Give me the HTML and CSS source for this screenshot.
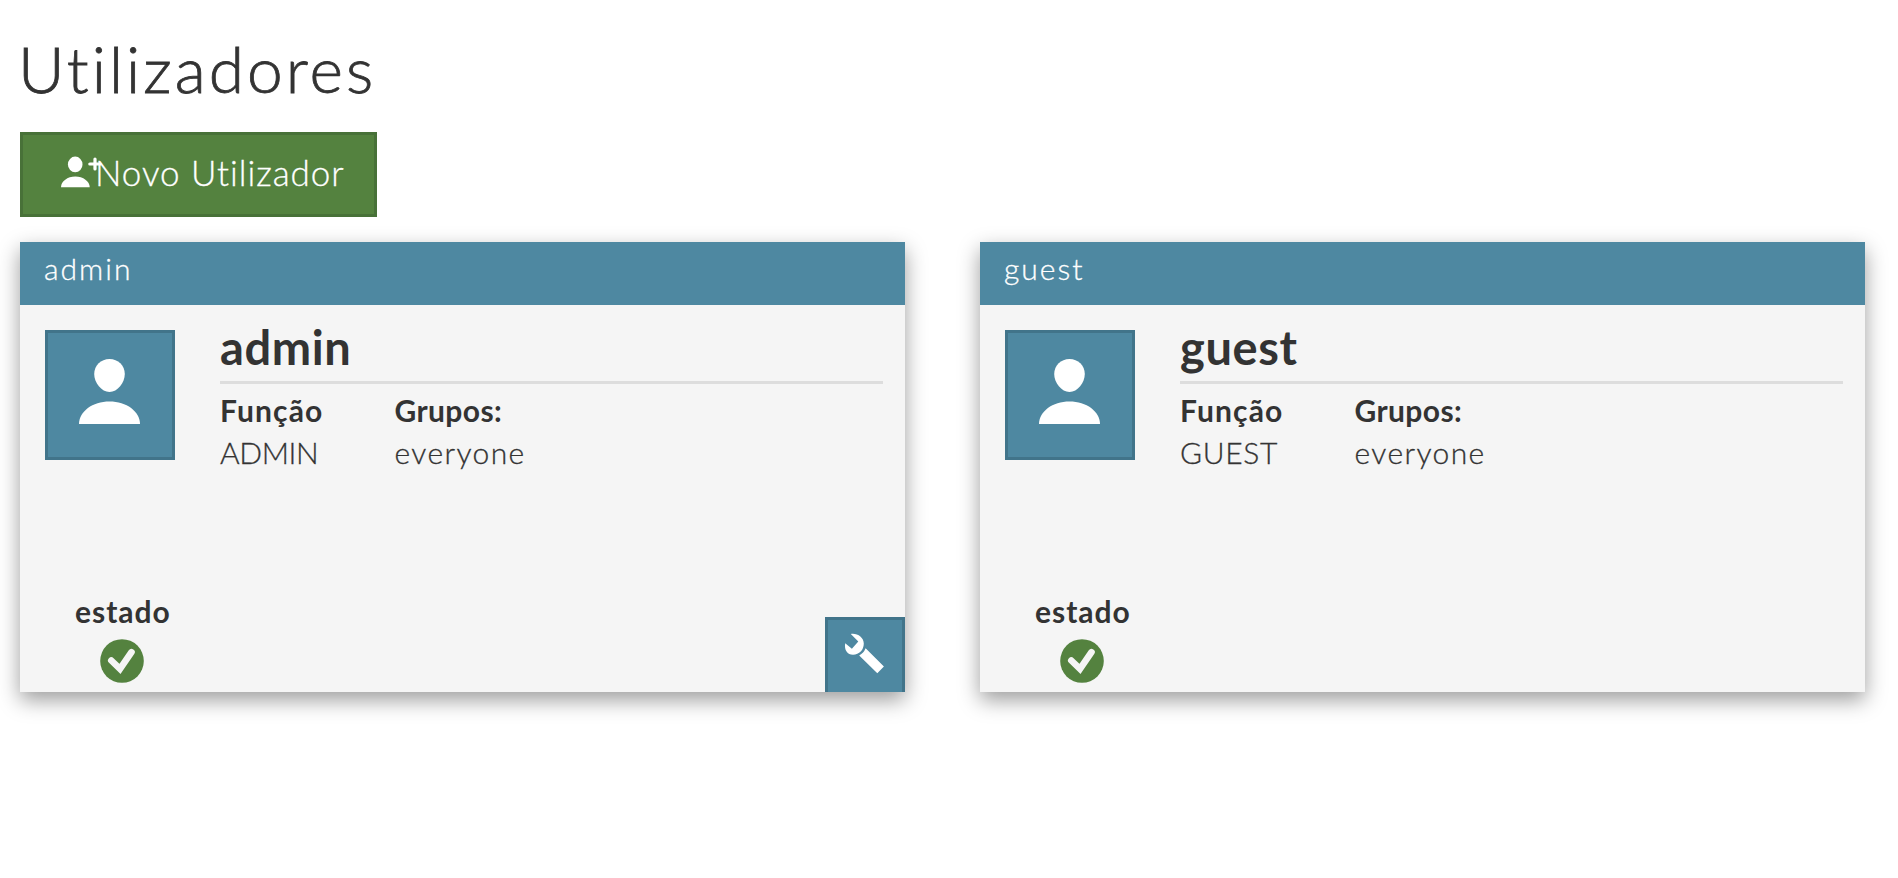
FILE: index.html
```html
<!DOCTYPE html>
<html lang="pt">
<head>
<meta charset="utf-8">
<title>Utilizadores</title>
<link rel="stylesheet" href="styles.css">
</head>
<body>
<h1 class="page-title">Utilizadores</h1>
<button class="new-user" type="button">
  <svg class="new-user-icon" width="35" height="36" viewBox="0 0 35 36"><ellipse cx="15.2" cy="9.4" rx="7.3" ry="7.8"/><path d="M1 32.3C1 26.500 7.500 21.600 15.300 21.600S29.700 26.500 29.700 32.300Z"/><path d="M35 4v10M29.800 9h10.400" stroke="#fff" stroke-width="3.200" stroke-linecap="round"/></svg>
  <span class="new-user-label">Novo Utilizador</span>
</button>
<main class="cards">
  <article class="card">
    <header class="card-header">admin</header>
    <section class="card-main">
      <div class="avatar"><svg width="124" height="124" viewBox="0 0 124 124"><path d="M61.500 26C70 26 76.800 32.500 76.800 41C76.800 49.500 69.500 59 61.500 59S46.200 49.500 46.200 41C46.200 32.500 53 26 61.500 26Z"/><path d="M31 91C31 78.500 44.500 68.500 61.500 68.500S92 78.500 92 91Z"/></svg></div>
      <div class="info">
        <h2 class="name">admin</h2>
        <div class="details">
          <div class="role"><strong class="label label-role">Função</strong><div class="value-admin">ADMIN</div></div>
          <div class="groups"><strong class="label label-groups">Grupos:</strong><div class="value-groups">everyone</div></div>
        </div>
      </div>
    </section>
    <footer class="card-footer">
      <div class="status"><strong class="label">estado</strong><svg class="check" width="44" height="44" viewBox="0 0 44 44"><circle cx="22" cy="22" r="21.800" fill="#54823f"/><path d="M11.300 21.500L20 29.900L31.500 13.200" fill="none" stroke="#f5f5f5" stroke-width="6.600" stroke-linecap="round"/></svg></div>
      <button class="tools" type="button" aria-label="Ferramentas"><svg width="74" height="72" viewBox="0 0 74 72"><path d="M22.800 13.900C29 12.800 35.800 17 35.800 23.500C35.800 30 31.300 34.700 25 34.700C19.500 34.700 16 30 17.200 23.200L23.900 28.800L30.300 21.600Z"/><path d="M37.600 28.300L55.900 46.500L49.300 53.200L31.200 35.400Q35.700 33.200 37.600 28.300Z"/></svg></button>
    </footer>
  </article>
  <article class="card">
    <header class="card-header">guest</header>
    <section class="card-main">
      <div class="avatar"><svg width="124" height="124" viewBox="0 0 124 124"><path d="M61.500 26C70 26 76.800 32.500 76.800 41C76.800 49.500 69.500 59 61.500 59S46.200 49.500 46.200 41C46.200 32.500 53 26 61.500 26Z"/><path d="M31 91C31 78.500 44.500 68.500 61.500 68.500S92 78.500 92 91Z"/></svg></div>
      <div class="info">
        <h2 class="name">guest</h2>
        <div class="details">
          <div class="role"><strong class="label label-role">Função</strong><div class="value-guest">GUEST</div></div>
          <div class="groups"><strong class="label label-groups">Grupos:</strong><div class="value-groups">everyone</div></div>
        </div>
      </div>
    </section>
    <footer class="card-footer">
      <div class="status"><strong class="label">estado</strong><svg class="check" width="44" height="44" viewBox="0 0 44 44"><circle cx="22" cy="22" r="21.800" fill="#54823f"/><path d="M11.300 21.500L20 29.900L31.500 13.200" fill="none" stroke="#f5f5f5" stroke-width="6.600" stroke-linecap="round"/></svg></div>
    </footer>
  </article>
</main>
</body>
</html>
```
FILE: styles.css
```css
* { box-sizing: border-box; }
body {
  margin: 0;
  min-height: 100vh;
  padding: 30px 33px 0 20px;
  background: #fff;
  color: #333;
  font: 300 30px/42px Lato, sans-serif;
  -webkit-text-stroke-width: 0.3px;
}
svg { display: block; fill: #fff; }
.page-title {
  margin: 0 0 25px -2px;
  font-size: 64px;
  font-weight: 300;
  line-height: 77px;
  letter-spacing: 3px;
  -webkit-text-stroke-width: 0.8px;
}
.new-user {
  display: flex;
  width: 357px;
  height: 85px;
  padding: 0 0 0 37px;
  border: 3px solid #487138;
  background: #54823f;
  color: #fff;
  font: 300 35px/75px Lato, sans-serif;
  letter-spacing: 0.97px;
  text-align: left;
  -webkit-text-stroke-width: 0.3px;
}
.new-user-icon { flex: none; margin-top: 20px; overflow: visible; }
.new-user-label { white-space: nowrap; }
.cards {
  display: grid;
  grid-template-columns: 1fr 1fr;
  gap: 75px;
  margin-top: 25px;
}
.card {
  display: flex;
  flex-direction: column;
  height: 450px;
  background: #f5f5f5;
  box-shadow: 0 8px 20px rgba(0, 0, 0, 0.39);
}
.card-header {
  height: 63px;
  padding-left: 24px;
  background: #4e88a1;
  color: #fff;
  line-height: 53px;
  letter-spacing: 2px;
}
.card-main { display: flex; padding: 12px 22px 0 25px; }
.avatar {
  flex: none;
  width: 130px;
  height: 130px;
  margin: 13px 45px 0 0;
  border: 3px solid #41748a;
  background: #4e88a1;
}
.info { flex: 1; }
.name {
  margin: 0;
  padding: 2px 0 6px;
  border-bottom: 3px solid #ddd;
  font-size: 47px;
  font-weight: 700;
  line-height: 56px;
  letter-spacing: 0.6px;
  -webkit-text-stroke-width: 0;
}
.details { display: flex; padding-top: 5px; }
.role { width: 174.5px; }
.label {
  display: block;
  font-weight: 700;
  letter-spacing: 1px;
  -webkit-text-stroke-width: 0;
}
.label-role { letter-spacing: 1.1px; }
.label-groups { letter-spacing: 0.4px; }
.value-admin { letter-spacing: -0.4px; }
.value-guest { letter-spacing: 0.7px; }
.value-groups { letter-spacing: 1.4px; }
.card-footer {
  display: flex;
  justify-content: space-between;
  align-items: flex-end;
  margin-top: auto;
}
.status { margin: 0 0 9px 55px; }
.check { margin: 7px 0 0 25px; }
.tools {
  width: 80px;
  height: 75px;
  padding: 0;
  border: 3px solid #41748a;
  border-bottom: 0;
  background: #4e88a1;
}
```
